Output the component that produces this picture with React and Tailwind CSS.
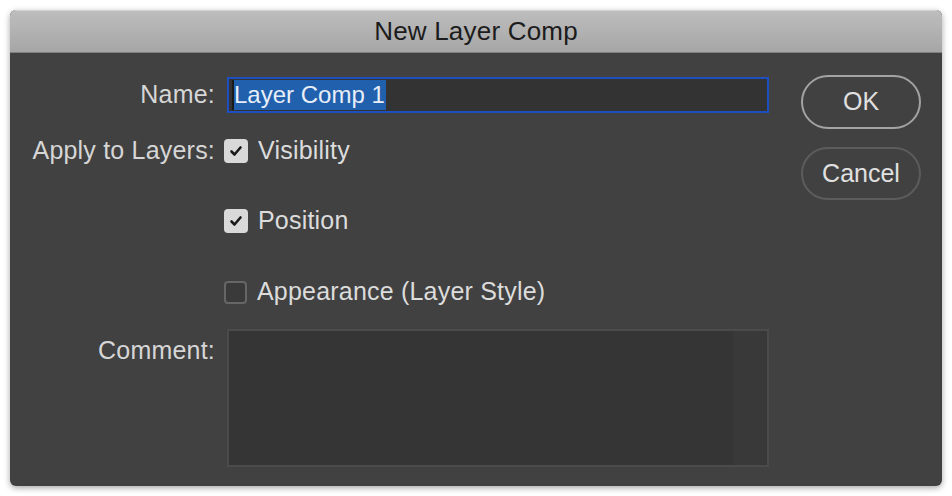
import React from 'react';

const font = { fontFamily: '"Liberation Sans", Arial, sans-serif' };

function Check({ checked }) {
  return checked ? (
    <span className="flex h-[24px] w-[24px] items-center justify-center rounded-[4px] bg-[#d9d9d9]">
      <svg viewBox="0 0 16 16" className="h-[16px] w-[16px]">
        <path d="M3.5 8.5 L6.5 11.5 L12.5 4.5" fill="none" stroke="#1a1a1a" strokeWidth="2.6" strokeLinecap="round" strokeLinejoin="round" />
      </svg>
    </span>
  ) : (
    <span className="h-[23px] w-[23px] rounded-[4px] border-2 border-[#666666] bg-[#3a3a3a]" />
  );
}

function CheckRow({ label, checked, className = '' }) {
  return (
    <div className={`flex h-[24px] items-center gap-[10px] ${className}`}>
      <Check checked={checked} />
      <span className="text-[25px] tracking-[0.2px] text-[#dcdcdc]">{label}</span>
    </div>
  );
}

export default function App() {
  return (
    <div className="min-h-[496px] w-[952px] bg-white pt-[10px] pl-[10px]" style={font}>
      <div className="w-[932px] overflow-hidden rounded-[6px] bg-[#414141] shadow-[0_2px_6px_rgba(0,0,0,0.35)]">
        {/* Title bar */}
        <div className="flex h-[43px] items-center justify-center border-t border-[#d4d4d4] border-b border-b-[#808080] bg-gradient-to-b from-[#bdbdbd] to-[#a6a6a6]">
          <span className="text-[26px] tracking-[0.2px] text-[#1c1c1c]">New Layer Comp</span>
        </div>

        {/* Body */}
        <div className="flex pt-[24px] pb-[19px]">
          <div className="flex flex-col">
            {/* Name */}
            <div className="flex h-[36px] items-center">
              <span className="w-[205px] text-right text-[25px] tracking-[0.2px] text-[#d6d6d6]">Name:</span>
              <div className="ml-[12px] flex h-[36px] w-[542px] items-center border-2 border-[#1d4fc0] bg-[#333333] pl-[3px]">
                <span className="h-[30px] w-[2px] bg-[#1a1a1a]" />
                <span className="flex h-[30px] items-center bg-[#2160ad] pr-[1px] text-[24px] text-[#e8eef8]">Layer Comp 1</span>
              </div>
            </div>

            {/* Apply to layers */}
            <div className="mt-[26px] flex">
              <span className="flex h-[24px] w-[205px] items-center justify-end whitespace-nowrap text-[25px] tracking-[0.2px] text-[#d6d6d6]">Apply to Layers:</span>
              <div className="ml-[9px] flex flex-col">
                <CheckRow label="Visibility" checked />
                <CheckRow label="Position" checked className="mt-[46px]" />
                <CheckRow label="Appearance (Layer Style)" className="mt-[47px]" />
              </div>
            </div>

            {/* Comment */}
            <div className="mt-[25px] flex">
              <span className="w-[205px] pt-[3px] text-right text-[25px] tracking-[0.2px] text-[#d6d6d6]">Comment:</span>
              <div className="ml-[12px] flex h-[138px] w-[542px] border-2 border-[#4b4b4b] bg-[#353535]">
                <div className="flex-1" />
                <div className="w-[34px] bg-[#393939]" />
              </div>
            </div>
          </div>

          {/* Buttons */}
          <div className="ml-[32px] flex flex-col gap-[18px]">
            <button className="-mt-[2px] flex h-[54px] w-[120px] items-center justify-center rounded-full border-2 border-[#a3a3a3] text-[25px] text-[#e0e0e0]">
              OK
            </button>
            <button className="flex h-[53px] w-[120px] items-center justify-center rounded-full border-2 border-[#5c5c5c] text-[25px] text-[#e0e0e0]">
              Cancel
            </button>
          </div>
        </div>
      </div>
    </div>
  );
}
